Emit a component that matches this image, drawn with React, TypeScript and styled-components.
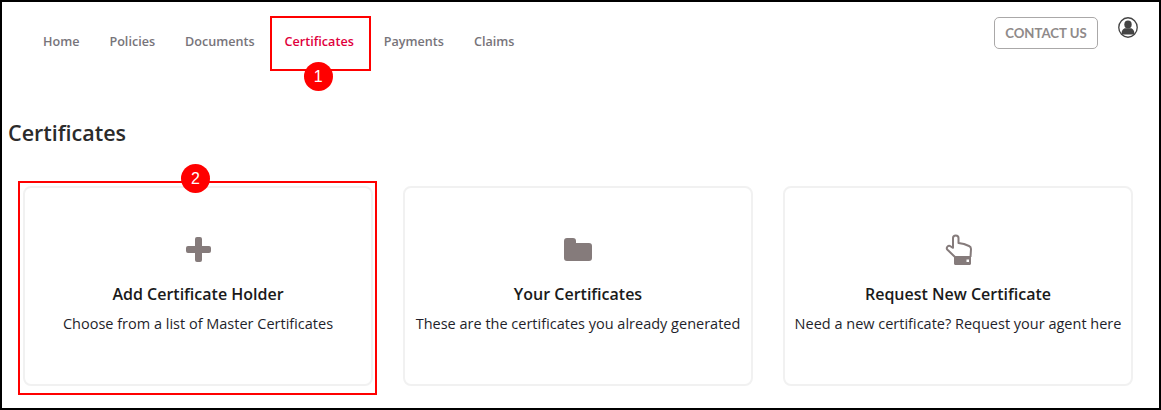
import React from 'react';
import styled, { createGlobalStyle } from 'styled-components';

const GlobalStyle = createGlobalStyle`
  html, body {
    margin: 0;
    padding: 0;
    background: #fff;
    font-family: "Open Sans", "Noto Sans", sans-serif;
  }
`

const Frame = styled.div`
  box-sizing: border-box;
  width: 1161px;
  height: 410px;
  border: 2px solid #000;
  background: #fff;
  overflow: hidden;
`

const Header = styled.header`
  display: flex;
  justify-content: space-between;
  align-items: flex-start;
  height: 116px;
  padding: 0 21px 0 41px;
`

const Nav = styled.nav`
  display: flex;
  gap: 30px;
  padding-top: 31px;
`

const NavItem = styled.a<{ $active?: boolean }>`
  position: relative;
  font-size: 12.6px;
  line-height: 18px;
  font-weight: 600;
  color: ${p => (p.$active ? '#e0003c' : '#77747a')};
`

const Actions = styled.div`
  display: flex;
  align-items: flex-start;
  gap: 20px;
  padding-top: 15px;
`

const ContactButton = styled.button`
  box-sizing: border-box;
  width: 104px;
  height: 32px;
  padding: 0;
  border: 1px solid #aaa8a8;
  border-radius: 5px;
  background: #fff;
  font-family: Lato, sans-serif;
  font-size: 13.2px;
  font-weight: 700;
  color: #8f8a8a;
`

const Avatar = styled.svg`
  display: block;
  width: 20px;
  height: 21px;
`

const Title = styled.h1`
  margin: 0 0 38px 6px;
  font-size: 21.5px;
  line-height: 30px;
  font-weight: 600;
  color: #2b2b2b;
`

const CardRow = styled.div`
  display: flex;
  gap: 30px;
  padding-left: 21px;
`

const Card = styled.div`
  position: relative;
  box-sizing: border-box;
  width: 350px;
  height: 200px;
  padding-top: 49px;
  border: 2px solid #f1f1f1;
  border-radius: 8px;
  text-align: center;
`

const CardIcon = styled.div`
  display: flex;
  justify-content: center;
  align-items: center;
  height: 24px;
  margin-bottom: 22px;
`

const CardTitle = styled.h2`
  margin: 0 0 9px;
  font-size: 16px;
  line-height: 22px;
  font-weight: 600;
  color: #1a1a1a;
`

const CardText = styled.p`
  margin: 0;
  font-size: 14.5px;
  line-height: 20px;
  color: #1f1f2b;
`

const Glyph = styled.svg`
  flex: none;
  display: block;
  fill: #857b7b;
`

const Callout = styled.span<{ $inset: string }>`
  position: absolute;
  inset: ${p => p.$inset};
  border: 2px solid #f00;
  pointer-events: none;
`

const Badge = styled.span<{ $left: number; $top: number }>`
  position: absolute;
  left: ${p => p.$left}px;
  top: ${p => p.$top}px;
  width: 29px;
  height: 29px;
  border-radius: 50%;
  background: #f00;
  color: #fff;
  font-family: "Liberation Sans", sans-serif;
  font-size: 16px;
  font-weight: 400;
  line-height: 29px;
  text-align: center;
`

const navItems = ['Home', 'Policies', 'Documents', 'Certificates', 'Payments', 'Claims'];

const Plus = () => (
  <Glyph width="25" height="25" viewBox="0 0 25 25">
    <path d="M9 2a2 2 0 0 1 2-2h3a2 2 0 0 1 2 2v7h7a2 2 0 0 1 2 2v3a2 2 0 0 1-2 2h-7v7a2 2 0 0 1-2 2h-3a2 2 0 0 1-2-2v-7H2a2 2 0 0 1-2-2v-3a2 2 0 0 1 2-2h7z" />
  </Glyph>
);

const Folder = () => (
  <Glyph width="28" height="23" viewBox="0 0 28 23">
    <path d="M0 3a3 3 0 0 1 3-3h6a3 3 0 0 1 3 3v2h13a3 3 0 0 1 3 3v12a3 3 0 0 1-3 3H3a3 3 0 0 1-3-3z" />
  </Glyph>
);

const Hand = () => (
  <Glyph width="27" height="31" viewBox="0 0 27 31">
    <path
      d="M10 23 L2.500 15.800 C0.800 14 2.500 11.200 5 12 L8 13.800 L8 4 C8 0.600 13.500 0.600 13.500 4 L13.500 9 L19 10 L24 12 C25.500 12.700 26 13.500 26 15 L25.500 23"
      fill="none"
      stroke="#857b7b"
      strokeWidth="2"
      strokeLinejoin="round"
    />
    <path d="M9 22h17v7.500c0 .8-.6 1.500-1.500 1.500h-14c-.9 0-1.500-.7-1.500-1.500z" />
    <rect x="21.500" y="25.500" width="2.500" height="2.500" fill="#fff" />
  </Glyph>
);

const cards = [
  { icon: <Plus />, title: 'Add Certificate Holder', text: 'Choose from a list of Master Certificates', marked: true },
  { icon: <Folder />, title: 'Your Certificates', text: 'These are the certificates you already generated' },
  { icon: <Hand />, title: 'Request New Certificate', text: 'Need a new certificate? Request your agent here' },
];

export default function App() {
  return (
    <Frame>
      <GlobalStyle />
      <Header>
        <Nav>
          {navItems.map(item => (
            <NavItem key={item} $active={item === 'Certificates'}>
              {item}
              {item === 'Certificates' && (
                <>
                  <Callout $inset="-17px -17px -20px -15px" />
                  <Badge $left={19} $top={29}>1</Badge>
                </>
              )}
            </NavItem>
          ))}
        </Nav>
        <Actions>
          <ContactButton>CONTACT US</ContactButton>
          <Avatar viewBox="0 0 21 21" preserveAspectRatio="none">
            <circle cx="10.5" cy="10.5" r="9.7" fill="#fff" stroke="#444" strokeWidth="1.4" />
            <circle cx="10.5" cy="7.5" r="3.9" fill="#444" />
            <path d="M3.800 16.500c0-3.900 2.400-5.300 4-5.300h5.400c1.600 0 4 1.400 4 5.300 0 .6-.5 1-1 1H4.800c-.5 0-1-.4-1-1z" fill="#444" />
          </Avatar>
        </Actions>
      </Header>
      <Title>Certificates</Title>
      <CardRow>
        {cards.map(card => (
          <Card key={card.title}>
            <CardIcon>{card.icon}</CardIcon>
            <CardTitle>{card.title}</CardTitle>
            <CardText>{card.text}</CardText>
            {card.marked && (
              <>
                <Callout $inset="-7px -6px -11px -7px" />
                <Badge $left={156} $top={-24}>2</Badge>
              </>
            )}
          </Card>
        ))}
      </CardRow>
    </Frame>
  )
}
